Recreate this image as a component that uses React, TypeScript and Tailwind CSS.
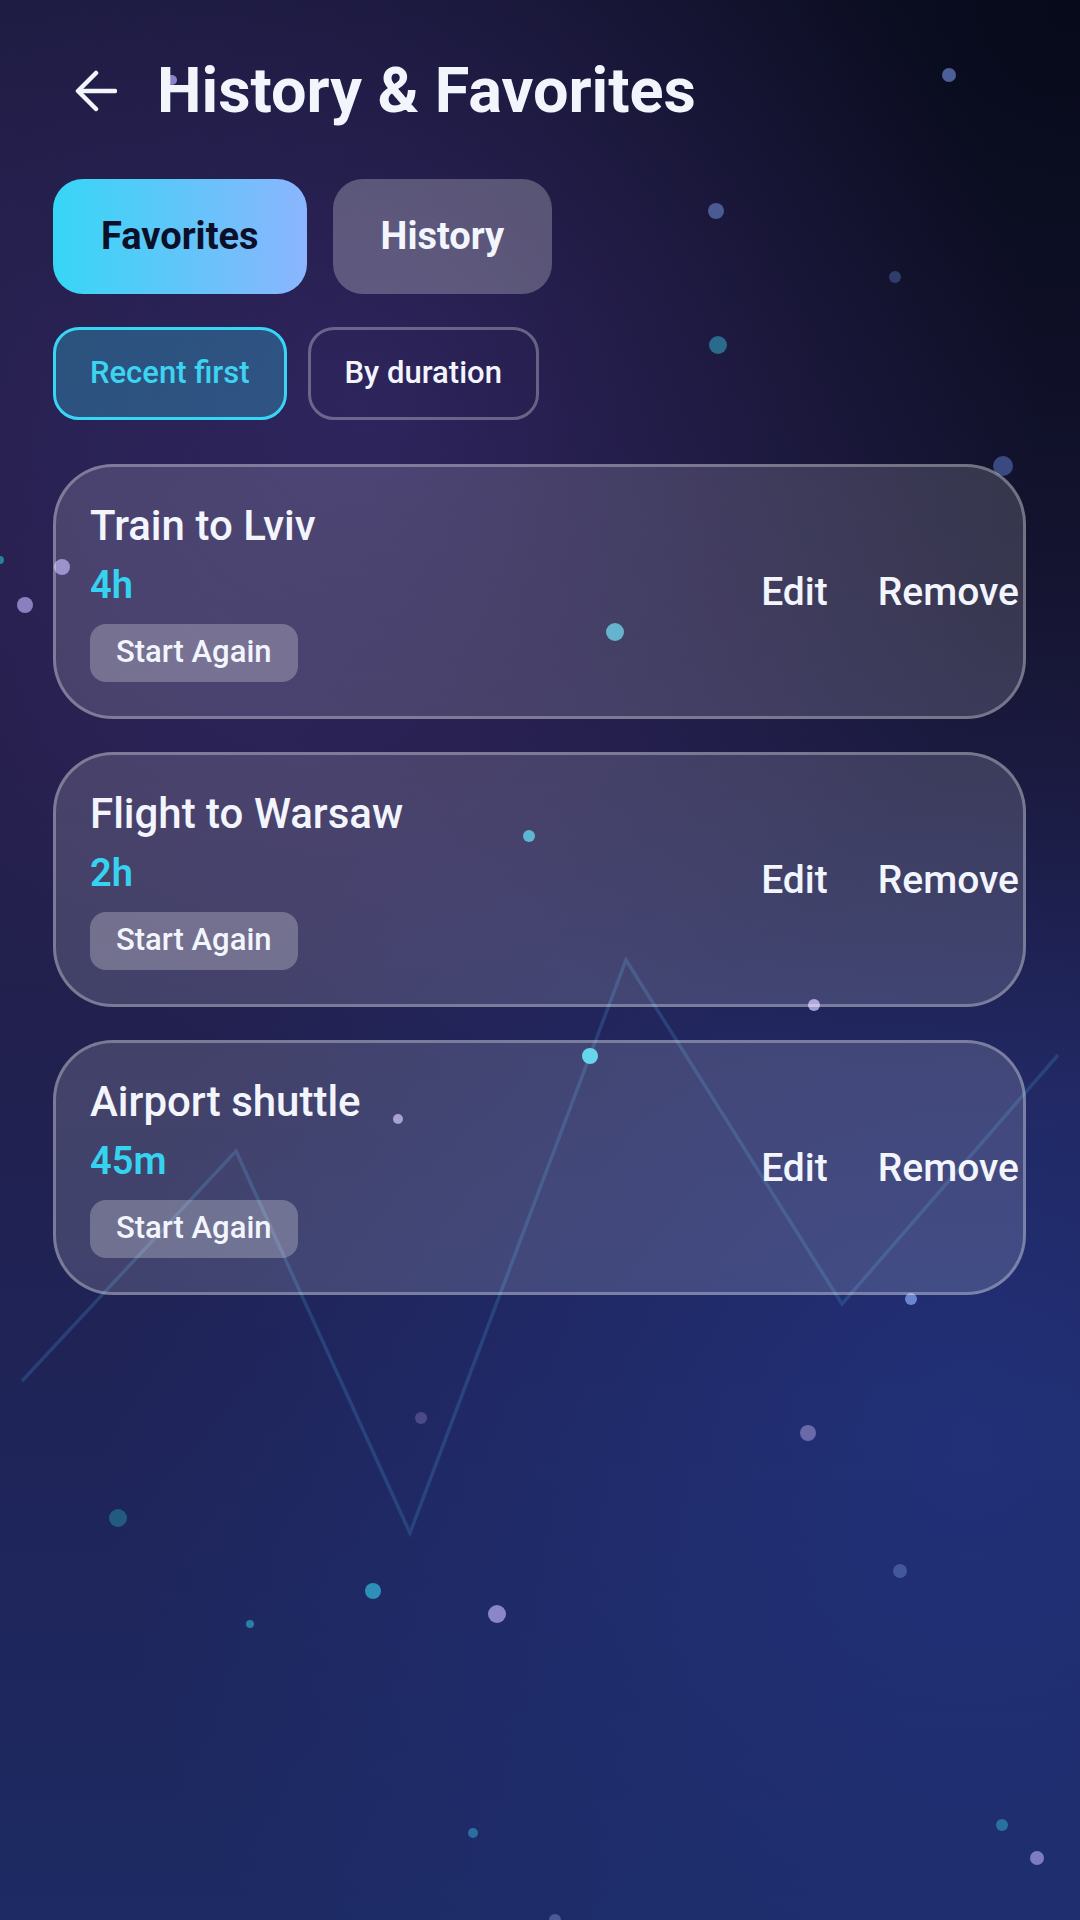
import React from "react";

const dots: [number, number, number, string][] = [
  [949, 75, 7, "#4d5f99"],
  [172, 80, 5, "#8b82c8"],
  [716, 211, 8, "#4a5a92"],
  [895, 277, 6, "#2e3d6a"],
  [718, 345, 9, "#2a6a8a"],
  [1003, 466, 10, "#3a4a80"],
  [0, 560, 4, "#2a7fa0"],
  [62, 567, 8, "#8a80c0"],
  [25, 605, 8, "#8a80c0"],
  [615, 632, 9, "#4aa6c4"],
  [529, 836, 6, "#44aacc"],
  [814, 1005, 6, "#a39bd6"],
  [590, 1056, 8, "#4ccfe8"],
  [398, 1119, 5, "#9a90cc"],
  [911, 1299, 6, "#6a86d0"],
  [421, 1418, 6, "#4c4a86"],
  [808, 1433, 8, "#6a6aaa"],
  [118, 1518, 9, "#235a80"],
  [900, 1571, 7, "#43589a"],
  [373, 1591, 8, "#2e8fb8"],
  [497, 1614, 9, "#8a86c8"],
  [250, 1624, 4, "#2a7fa8"],
  [473, 1833, 5, "#2a6fa0"],
  [1002, 1825, 6, "#2a70a0"],
  [1037, 1858, 7, "#7e7cc0"],
  [555, 1920, 6, "#4a5a9a"],
];

const items = [
  { title: "Train to Lviv", dur: "4h" },
  { title: "Flight to Warsaw", dur: "2h" },
  { title: "Airport shuttle", dur: "45m" },
];

export default function App() {
  return (
    <div className="relative w-[1080px] min-h-[1920px] overflow-hidden font-['Roboto',sans-serif] bg-[radial-gradient(circle_at_34%_21%,rgba(68,50,130,0.5),transparent_40%),radial-gradient(circle_at_100%_0%,#070a1a,transparent_50%),radial-gradient(circle_at_90%_75%,rgba(35,58,145,0.55),transparent_50%),linear-gradient(180deg,#1b1a3d_0%,#231e48_40%,#1f2356_70%,#1d2a63_100%)]">
      <svg className="absolute inset-0 pointer-events-none" width="1080" height="1920" viewBox="0 0 1080 1920">
        <polyline
          points="22,1381 236,1151 410,1533 626,960 842,1304 1058,1055"
          fill="none"
          stroke="rgba(60,120,180,0.34)"
          strokeWidth="3.5"
          strokeLinejoin="miter"
        />
        {dots.map(([x, y, r, c], i) => (
          <circle key={i} cx={x} cy={y} r={r} fill={c} />
        ))}
      </svg>

      <div className="relative px-[53px] pt-[55px]">
        <div className="flex items-center h-[72px]">
          <svg className="ml-[22px]" width="42" height="42" viewBox="0 0 42 42" fill="none">
            <path d="M40 21H4" stroke="#f3f5fd" strokeWidth="4.5" strokeLinecap="round" />
            <path d="M21 3L3 21L21 39" stroke="#f3f5fd" strokeWidth="4.5" strokeLinecap="round" strokeLinejoin="round" />
          </svg>
          <h1 className="ml-[40px] text-[63px] leading-[72px] font-bold text-[#f3f5fd]">History &amp; Favorites</h1>
        </div>

        <div className="mt-[52px] flex gap-[26px]">
          <button className="h-[115px] px-12 rounded-[30px] bg-[linear-gradient(90deg,#36d6f6,#8bb5fe)] text-[38px] font-bold text-[#0b1028]">
            Favorites
          </button>
          <button className="h-[115px] px-12 rounded-[30px] bg-white/25 text-[38px] font-bold text-[#f3f5fd]">
            History
          </button>
        </div>

        <div className="mt-[33px] flex gap-[21px]">
          <button className="h-[93px] px-[34px] rounded-[26px] border-[3px] border-[#38d5f5] bg-[rgba(56,213,245,0.27)] text-[31px] font-medium text-[#3dd4f2]">
            Recent first
          </button>
          <button className="h-[93px] px-[34px] rounded-[26px] border-[3px] border-white/30 text-[31px] font-medium text-[#f3f5fd]">
            By duration
          </button>
        </div>

        <div className="mt-[44px] flex flex-col gap-[33px]">
          {items.map((it) => (
            <div
              key={it.title}
              className="w-[973px] h-[255px] rounded-[60px] border-[3px] border-white/30 bg-white/15 flex items-center justify-between pl-[34px] pr-[4px]"
            >
              <div className="flex flex-col items-start">
                <div className="text-[42px] leading-[48px] font-medium text-[#f3f5fd]">{it.title}</div>
                <div className="mt-[13px] text-[38px] leading-[44px] font-semibold text-[#35d3f0]">{it.dur}</div>
                <button className="mt-[17px] h-[58px] px-[26px] rounded-[16px] bg-white/25 text-[31px] font-medium text-[#f3f5fd]">
                  Start Again
                </button>
              </div>
              <div className="flex items-center gap-[50px] mt-[2px]">
                <button className="text-[39px] font-medium text-[#f3f5fd]">Edit</button>
                <button className="text-[39px] font-medium text-[#f3f5fd]">Remove</button>
              </div>
            </div>
          ))}
        </div>
      </div>
    </div>
  );
}
